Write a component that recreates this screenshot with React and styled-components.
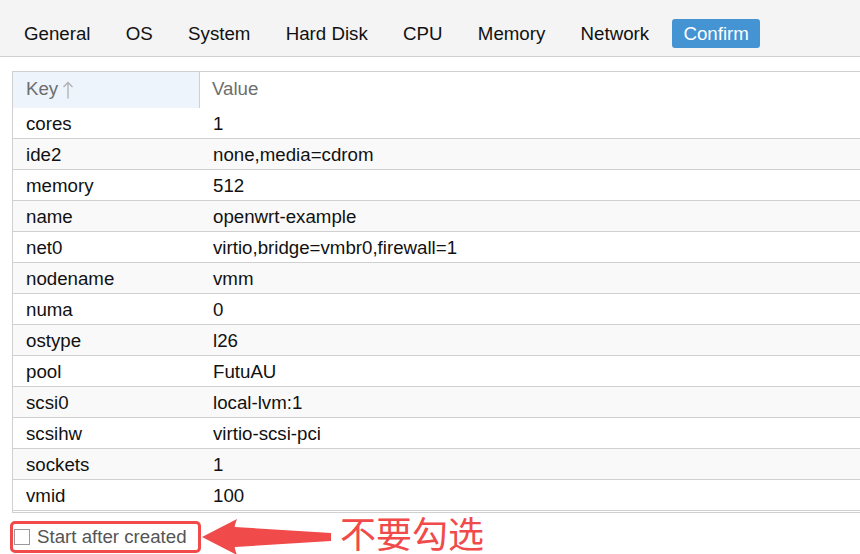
import styled, { createGlobalStyle } from "styled-components";

const GlobalStyle = createGlobalStyle`
  body {
    margin: 0;
    background: #fff;
    font-family: "Liberation Sans", Arial, sans-serif;
    overflow: hidden;
  }
`;

const Page = styled.div`
  width: 860px;
  height: 554px;
  overflow: hidden;
`;

const TabBar = styled.div`
  display: flex;
  align-items: flex-end;
  gap: 11.3px;
  height: 57px;
  box-sizing: border-box;
  padding: 0 12px 8px;
  background: #f4f4f4;
  border-bottom: 1px solid #d0d0d0;
`;

const Tab = styled.div`
  height: 29px;
  line-height: 29px;
  padding: 0 ${(p) => (p.$active ? "11px" : "12px")};
  font-size: 18.7px;
  color: ${(p) => (p.$active ? "#fff" : "#111")};
  background: ${(p) => (p.$active ? "#4493d3" : "transparent")};
  border-radius: 3px;
`;

const Content = styled.div`
  padding: 14px 0 0 12px;
`;

const Grid = styled.div`
  width: 860px;
  border-top: 1px solid #d0d0d0;
  border-left: 1px solid #d0d0d0;
  border-bottom: 1px solid #d0d0d0;
  padding-bottom: 1px;
`;

const HeadRow = styled.div`
  display: grid;
  grid-template-columns: 187px 1fr;
  height: 36px;
`;

const HeadCell = styled.div`
  display: flex;
  align-items: center;
  padding-left: ${(p) => (p.$first ? "13px" : "12px")};
  padding-bottom: 2px;
  font-size: 18.7px;
  color: #6e6e6e;
  background: ${(p) => (p.$first ? "#edf4fc" : "#fff")};
  border-right: ${(p) => (p.$first ? "1px solid #d0d0d0" : "none")};
`;

const SortIcon = styled.svg`
  margin-left: 4px;
  margin-top: 2px;
`;

const Row = styled.div`
  display: grid;
  grid-template-columns: 188px 1fr;
  height: 31px;
  box-sizing: border-box;
  padding-top: 1px;
  align-items: center;
  font-size: 18.7px;
  color: #111;
  background: ${(p) => (p.$odd ? "#f9f9f9" : "#fff")};
  border-bottom: 1px solid #d0d0d0;
`;

const Cell = styled.div`
  padding-left: ${(p) => (p.$key ? "13px" : "12px")};
  white-space: nowrap;
`;

const Footer = styled.div`
  display: flex;
  align-items: flex-start;
  padding: 8px 0 0 10px;
`;

const Highlight = styled.div`
  display: flex;
  align-items: center;
  gap: 7px;
  height: 32px;
  width: 191px;
  box-sizing: border-box;
  padding-left: 1px;
  border: 3px solid #f04a4a;
  border-radius: 5px;
`;

const Check = styled.span`
  width: 14px;
  height: 14px;
  border: 1px solid #9a9a9a;
  background: #fff;
`;

const Label = styled.span`
  font-size: 18.7px;
  color: #555;
  white-space: nowrap;
`;

const ArrowIcon = styled.svg`
  margin-top: -3px;
  flex-shrink: 0;
`;

const Note = styled.span`
  margin-left: 7px;
  margin-top: -7px;
  font-family: "Noto Sans CJK SC", sans-serif;
  font-size: 36px;
  color: #f04a4a;
  line-height: 36px;
  white-space: nowrap;
`;

const tabs = ["General", "OS", "System", "Hard Disk", "CPU", "Memory", "Network", "Confirm"];

const rows = [
  ["cores", "1"],
  ["ide2", "none,media=cdrom"],
  ["memory", "512"],
  ["name", "openwrt-example"],
  ["net0", "virtio,bridge=vmbr0,firewall=1"],
  ["nodename", "vmm"],
  ["numa", "0"],
  ["ostype", "l26"],
  ["pool", "FutuAU"],
  ["scsi0", "local-lvm:1"],
  ["scsihw", "virtio-scsi-pci"],
  ["sockets", "1"],
  ["vmid", "100"],
];

export default function App() {
  return (
    <Page>
      <GlobalStyle />
      <TabBar>
        {tabs.map((t) => (
          <Tab key={t} $active={t === "Confirm"}>
            {t}
          </Tab>
        ))}
      </TabBar>
      <Content>
        <Grid>
          <HeadRow>
            <HeadCell $first>
              Key
              <SortIcon width="12" height="18" viewBox="0 0 12 18">
                <path d="M6 1.5 V17.5 M1.5 6 L6 1.5 L10.5 6" fill="none" stroke="#b0b0b0" strokeWidth="1.3" />
              </SortIcon>
            </HeadCell>
            <HeadCell>Value</HeadCell>
          </HeadRow>
          {rows.map(([k, v], i) => (
            <Row key={k} $odd={i % 2 === 1}>
              <Cell $key>{k}</Cell>
              <Cell>{v}</Cell>
            </Row>
          ))}
        </Grid>
      </Content>
      <Footer>
        <Highlight>
          <Check />
          <Label>Start after created</Label>
        </Highlight>
        <ArrowIcon width="132" height="38" viewBox="0 0 132 38">
          <path
            d="M1 19 L36 1 Q33 9 34 9 L130 15 L130 23 L34 29 Q33 29 36 37 Z"
            fill="#f04a4a"
          />
        </ArrowIcon>
        <Note>不要勾选</Note>
      </Footer>
    </Page>
  );
}
